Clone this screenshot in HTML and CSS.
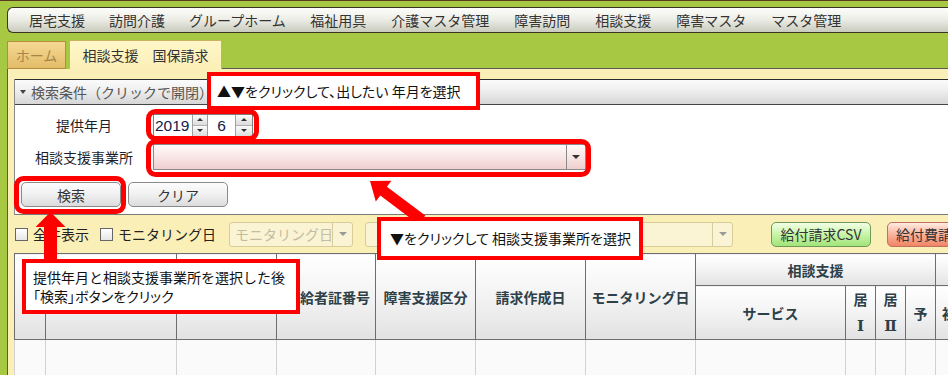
FILE: index.html
```html
<!DOCTYPE html>
<html lang="ja">
<head>
<meta charset="utf-8">
<title>相談支援 国保請求</title>
<link rel="stylesheet" href="styles.css">
</head>
<body>
<div class="page">
  <nav class="menubar">
    <span class="menu-item">居宅支援</span>
    <span class="menu-item">訪問介護</span>
    <span class="menu-item">グループホーム</span>
    <span class="menu-item">福祉用具</span>
    <span class="menu-item">介護マスタ管理</span>
    <span class="menu-item">障害訪問</span>
    <span class="menu-item">相談支援</span>
    <span class="menu-item">障害マスタ</span>
    <span class="menu-item">マスタ管理</span>
  </nav>

  <div class="tabs">
    <div class="tab tab-home">ホーム</div>
    <div class="tab tab-active">相談支援　国保請求</div>
    <div class="tab-fill"></div>
  </div>

  <div class="panel">
    <div class="search">
      <div class="search-head"><span class="caret"></span>検索条件（クリックで開閉）</div>
      <div class="search-body">
        <div class="form-row row-date">
          <div class="label">提供年月</div>
          <div class="spinner">
            <div class="spin-input year">2019</div>
            <div class="spin-btns"><span class="spin-up"></span><span class="spin-down"></span></div>
            <div class="spin-input month">6</div>
            <div class="spin-btns"><span class="spin-up"></span><span class="spin-down"></span></div>
          </div>
        </div>
        <div class="form-row row-office">
          <div class="label">相談支援事業所</div>
          <div class="select-pink">
            <span class="select-text"></span>
            <span class="select-arrow"><span class="tri"></span></span>
          </div>
        </div>
        <div class="btn-row">
          <button class="btn">検索</button>
          <button class="btn">クリア</button>
        </div>
      </div>
    </div>

    <div class="toolbar">
      <span class="check"></span><span class="check-label">全件表示</span>
      <span class="check check-2"></span><span class="check-label">モニタリング日</span>
      <div class="dsel dsel-1"><span class="dsel-text">モニタリング日</span><span class="dsel-arrow"><span class="tri tri-grey"></span></span></div>
      <div class="dsel dsel-2"><span class="dsel-text"></span><span class="dsel-arrow"><span class="tri tri-grey"></span></span></div>
      <button class="tbtn tbtn-green">給付請求CSV</button>
      <button class="tbtn tbtn-red">給付費請求書</button>
    </div>

    <table class="grid">
      <colgroup>
        <col class="c31"><col class="c131"><col class="c100"><col class="c99"><col class="c100">
        <col class="c110"><col class="c110"><col class="c150"><col class="c30"><col class="c30">
        <col class="c30"><col class="c60">
      </colgroup>
      <thead>
        <tr class="hrow-1">
          <th rowspan="2"></th>
          <th rowspan="2"></th>
          <th rowspan="2"></th>
          <th rowspan="2" class="right">給者証番号</th>
          <th rowspan="2">障害支援区分</th>
          <th rowspan="2">請求作成日</th>
          <th rowspan="2">モニタリング日</th>
          <th colspan="4">相談支援</th>
          <th></th>
        </tr>
        <tr class="hrow-2">
          <th>サービス</th>
          <th class="stack">居<br><span class="roman">Ⅰ</span></th>
          <th class="stack">居<br><span class="roman">Ⅱ</span></th>
          <th>予</th>
          <th class="left">初</th>
        </tr>
      </thead>
      <tbody>
        <tr class="brow">
          <td></td><td></td><td></td><td></td><td></td><td></td><td></td><td></td><td></td><td></td><td></td><td></td>
        </tr>
      </tbody>
    </table>
  </div>

  <svg class="overlay" width="948" height="375" viewBox="0 0 948 375">
    <rect x="148.5" y="111.5" width="108" height="27" rx="7" fill="none" stroke="#ff0000" stroke-width="5"/>
    <rect x="148.5" y="141.5" width="440" height="33" rx="7" fill="none" stroke="#ff0000" stroke-width="5"/>
    <rect x="16.5" y="178.5" width="107" height="33" rx="7" fill="none" stroke="#ff0000" stroke-width="5"/>
    <polygon fill="#ff0000" points="50.5,212 65.5,227 57,227 57,262 44,262 44,227 35.5,227"/>
    <polygon fill="#ff0000" points="370,181 391.4,180.8 386.9,186.8 425.3,215.6 418.7,224.4 380.3,195.6 375.8,201.6"/>
  </svg>

  <div class="callout callout-1">▲▼をクリックして、出したい 年月を選択</div>
  <div class="callout callout-2">▼をクリックして 相談支援事業所を選択</div>
  <div class="callout callout-3"><span class="line-full">提供年月と相談支援事業所を選択した後</span><br><span class="line-prop">「検索」ボタンをクリック</span></div>
</div>
</body>
</html>
```

FILE: styles.css
```css
* { box-sizing: border-box; }

html, body {
  margin: 0;
  padding: 0;
}

body {
  background: #a7c843;
  font-family: "Noto Sans CJK JP", "Noto Sans", sans-serif;
  color: #333;
}

.page {
  position: relative;
  width: 948px;
  height: 375px;
  overflow: hidden;
  padding-top: 7px;
  background: linear-gradient(#5b3b1f, #5b3b1f) top left / 100% 1px no-repeat, #a7c843;
}

/* top menu */
.menubar {
  display: flex;
  align-items: center;
  margin-left: 7px;
  height: 26px;
  padding-left: 9px;
  border: 1px solid #3b3326;
  border-right: none;
  border-radius: 6px 0 0 6px;
  background: linear-gradient(#fdfdfb 0%, #eeeee8 45%, #c9cbbd 100%);
  white-space: nowrap;
}

.menu-item {
  font-size: 14px;
  line-height: 24px;
  padding: 0 12px;
  color: #333;
}

.menu-item:nth-child(n+4) { padding: 0 12.5px; }

/* tabs */
.tabs {
  display: flex;
  align-items: flex-end;
  margin-top: 7px;
  margin-left: 7px;
  height: 29px;
}

.tab {
  font-size: 14px;
  text-align: center;
}

.tab-home {
  width: 59px;
  height: 28px;
  line-height: 26px;
  border: 1px solid #b68d3e;
  background: linear-gradient(#f6d994, #e2bc68);
  color: #a7844a;
}

.tab-active {
  width: 153px;
  height: 29px;
  margin-left: 3px;
  line-height: 28px;
  border: 1px solid #cdb25e;
  border-bottom: none;
  background: linear-gradient(#fff7c8, #fcefb8);
  color: #333;
}

.tab-fill {
  flex: 1;
  height: 29px;
  border-bottom: 1px solid #5a5a5a;
}

/* panel */
.panel {
  margin-left: 7px;
  padding: 10px 0 0 6px;
  border-left: 1px solid #5a5a50;
  background: #fbefb8;
  height: 306px;
}

.search {
  border-left: 1px solid #8a8a8a;
}

.search-head {
  height: 26px;
  border-top: 1px solid #2d2d2d;
  border-bottom: 1px solid #444;
  background: linear-gradient(#fbfbfb, #f0f0f0 40%, #d6d6d6);
  font-size: 14px;
  line-height: 24px;
  color: #555;
  padding-left: 5px;
  display: flex;
  align-items: center;
  white-space: nowrap;
}

.caret {
  width: 0;
  height: 0;
  border-left: 3.5px solid transparent;
  border-right: 3.5px solid transparent;
  border-top: 4px solid #444;
  margin-right: 5px;
}

.search-body {
  background: #fff;
  padding: 9px 0 7px 0;
  border-bottom: 1px solid #7a7a7a;
}

.form-row {
  display: flex;
  align-items: center;
}

.row-date { height: 22px; }
.row-office { height: 25px; margin-top: 8px; }

.label {
  width: 138px;
  text-align: center;
  font-size: 14px;
  color: #1e1e2a;
}

.spinner {
  display: flex;
  height: 23px;
  border: 1px solid #7d7d7d;
  background: #fff;
}

.spin-input {
  font-family: "Liberation Sans", "DejaVu Sans", sans-serif;
  font-size: 15.5px;
  line-height: 21px;
  color: #141a4a;
}

.year { width: 38px; padding-left: 1px; }
.month { width: 27px; text-align: center; }

.spin-btns {
  display: flex;
  flex-direction: column;
  width: 16px;
  border-left: 1px solid #a0a0a0;
  border-right: 1px solid #a0a0a0;
}

.spin-btns:last-child { border-right: none; width: 17px; }

.spin-up, .spin-down {
  flex: 1;
  display: flex;
  align-items: center;
  justify-content: center;
  background: linear-gradient(#fbfbfb, #dcdcdc);
}

.spin-up { border-bottom: 1px solid #b0b0b0; }

.spin-up::before {
  content: "";
  border-left: 3px solid transparent;
  border-right: 3px solid transparent;
  border-bottom: 3px solid #333;
}

.spin-down::before {
  content: "";
  border-left: 3px solid transparent;
  border-right: 3px solid transparent;
  border-top: 3px solid #333;
}

.select-pink {
  display: flex;
  width: 433px;
  height: 26px;
  border: 1px solid #8a8a8a;
  background: linear-gradient(#fffafa, #f9e6e6 50%, #efcfcf);
}

.select-text { flex: 1; }

.select-arrow {
  width: 19px;
  border-left: 1px solid #8a8a8a;
  display: flex;
  align-items: center;
  justify-content: center;
}

.tri {
  width: 0;
  height: 0;
  border-left: 4px solid transparent;
  border-right: 4px solid transparent;
  border-top: 4px solid #333;
}

.tri-grey { border-top-color: #999; }

.btn-row {
  display: flex;
  gap: 7px;
  margin-top: 13px;
  padding-left: 6px;
}

.btn {
  width: 100px;
  height: 25px;
  border: 1px solid #8a8a8a;
  border-radius: 5px;
  background: linear-gradient(#fdfdfd, #f0f0f0 50%, #dcdcdc);
  font-family: inherit;
  font-size: 14px;
  line-height: 22px;
  color: #333;
  padding: 0;
}

/* toolbar */
.toolbar {
  display: flex;
  align-items: center;
  height: 38px;
  padding-left: 1px;
  white-space: nowrap;
}

.check {
  width: 13px;
  height: 13px;
  border: 1px solid #666;
  background: linear-gradient(#fff, #e6e6e6);
  flex: none;
}

.check-2 { margin-left: 11px; }

.check-label {
  margin-left: 5px;
  font-size: 14px;
  color: #222;
}

.dsel {
  display: flex;
  height: 25px;
  border: 1px solid #d8cc9a;
  border-radius: 3px;
  background: #faf3d4;
  flex: none;
}

.dsel-1 { width: 124px; margin-left: 13px; }
.dsel-2 { width: 368px; margin-left: 12px; }

.dsel-text {
  flex: 1;
  overflow: hidden;
  font-size: 14px;
  line-height: 23px;
  padding-left: 5px;
  color: #c4bca2;
}

.dsel-arrow {
  width: 20px;
  border-left: 1px solid #d8cc9a;
  display: flex;
  align-items: center;
  justify-content: center;
}

.tbtn {
  height: 25px;
  border-radius: 5px;
  font-family: inherit;
  font-size: 14px;
  line-height: 22px;
  color: #333;
  padding: 0;
  flex: none;
  white-space: nowrap;
}

.tbtn-green {
  width: 100px;
  margin-left: 38px;
  border: 1px solid #6f9a55;
  background: linear-gradient(#f2ffe6, #c8f4a8 50%, #a2e47a);
}

.tbtn-red {
  width: 110px;
  margin-left: 16px;
  text-align: left;
  padding-left: 8px;
  border: 1px solid #c0705c;
  background: linear-gradient(#ffebe2, #f9b29c 50%, #f08565);
}

/* grid */
.grid {
  table-layout: fixed;
  border-collapse: collapse;
  width: 981px;
}

.c31 { width: 31px; }
.c131 { width: 131px; }
.c100 { width: 100px; }
.c99 { width: 99px; }
.c110 { width: 110px; }
.c150 { width: 150px; }
.c30 { width: 30px; }
.c60 { width: 60px; }

.grid th {
  border: 1px solid #6e6e6e;
  background: linear-gradient(#ffffff, #f3f3f3 50%, #e2e2e2);
  font-size: 14px;
  font-weight: bold;
  color: #2d4048;
  padding: 0;
  text-align: center;
  vertical-align: middle;
  white-space: nowrap;
  overflow: hidden;
}

.grid th.left { text-align: left; padding-left: 6px; }
.grid th.right { text-align: right; padding-right: 5px; }

.hrow-1 { height: 32px; }
.hrow-2 { height: 53px; }

.grid th.stack { line-height: 26px; }

.roman {
  font-family: "Liberation Serif", "DejaVu Serif", serif;
  font-size: 15px;
}

.brow { height: 40px; }

.grid td {
  border-left: 1px solid #d2d2d2;
  border-right: 1px solid #d2d2d2;
  background: #fafafa;
}

/* annotation overlay */
.overlay {
  position: absolute;
  left: 0;
  top: 0;
  pointer-events: none;
}

.callout {
  position: absolute;
  background: #fff;
  border: 4px solid #ff0000;
  font-size: 14px;
  color: #111;
  white-space: nowrap;
  font-feature-settings: "palt";
}

.callout-1 {
  left: 207px;
  top: 72px;
  width: 273px;
  height: 38px;
  padding-left: 6px;
  line-height: 30px;
}

.callout-2 {
  left: 377px;
  top: 217px;
  width: 266px;
  height: 43px;
  padding-left: 9px;
  line-height: 35px;
}

.callout-3 {
  left: 22px;
  top: 259px;
  width: 278px;
  height: 55px;
  padding: 5px 0 0 7px;
  line-height: 19px;
}

.line-full { font-feature-settings: normal; }
```
